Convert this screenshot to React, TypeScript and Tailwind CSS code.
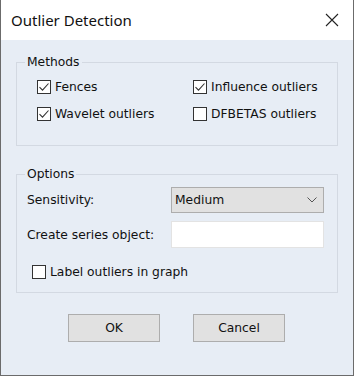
import React from "react";

const font = { fontFamily: '"DejaVu Sans", sans-serif' };

function Check({ checked }: { checked: boolean }) {
  return (
    <span className="w-[14px] h-[14px] border border-[#333333] bg-white flex items-center justify-center shrink-0">
      {checked && (
        <svg width="12" height="12" viewBox="0 0 12 12">
          <path d="M1.5 6.2 L4.5 9.2 L10.5 2.5" fill="none" stroke="#333333" strokeWidth="1.1" />
        </svg>
      )}
    </span>
  );
}

function CheckItem({ checked, label }: { checked: boolean; label: string }) {
  return (
    <label className="flex items-center gap-[4px] h-[16px] text-[12.3px] text-[#111]">
      <Check checked={checked} />
      <span>{label}</span>
    </label>
  );
}

export default function App() {
  return (
    <div className="w-[354px] h-[376px] bg-[#e7edf5] border-l border-r border-b border-[#6b6b6b] flex flex-col" style={font}>
      <div className="h-[40px] bg-white flex items-center justify-between pl-[10px] pr-[14px] shrink-0">
        <span className="text-[15px] text-[#111]" style={{ fontFamily: '"Noto Sans", sans-serif' }}>
          Outlier Detection
        </span>
        <svg width="14" height="14" viewBox="0 0 14 14">
          <path d="M1 1 L13 13 M13 1 L1 13" stroke="#222" strokeWidth="1.1" />
        </svg>
      </div>
      <div className="flex flex-col px-[15px]">
        <fieldset className="mt-[13px] h-[93px] border border-[#d3d9e2] pl-[8px] pr-[10px] pb-0">
          <legend className="px-[2px] text-[12.3px] text-[#111]">Methods</legend>
          <div className="grid grid-cols-[156px_1fr] mt-[8px] pl-[12px] gap-y-[11px]">
            <CheckItem checked label="Fences" />
            <CheckItem checked label="Influence outliers" />
            <CheckItem checked label="Wavelet outliers" />
            <CheckItem checked={false} label="DFBETAS outliers" />
          </div>
        </fieldset>
        <fieldset className="mt-[19px] h-[128px] border border-[#d3d9e2] pl-[8px] pr-[10px]">
          <legend className="px-[2px] text-[12.3px] text-[#111]">Options</legend>
          <div className="flex items-center mt-[4px]">
            <span className="w-[146px] text-[12.3px] text-[#111] pl-[2px]">Sensitivity:</span>
            <div className="w-[153px] h-[26px] bg-[#e1e1e1] border border-[#adadad] flex items-center justify-between pl-[3px] pr-[6px] text-[12.3px] text-[#111]">
              <span>Medium</span>
              <svg width="10" height="6" viewBox="0 0 10 6">
                <path d="M0.5 0.5 L5 5 L9.5 0.5" fill="none" stroke="#555" strokeWidth="1" />
              </svg>
            </div>
          </div>
          <div className="flex items-center mt-[8px]">
            <span className="w-[146px] text-[12.3px] text-[#111] pl-[2px]">Create series object:</span>
            <div className="w-[153px] h-[27px] bg-white border border-[#e3e3e3]" />
          </div>
          <div className="mt-[16px] pl-[7px]">
            <CheckItem checked={false} label="Label outliers in graph" />
          </div>
        </fieldset>
        <div className="flex gap-[33px] mt-[21px] pl-[52px]">
          <div className="w-[92px] h-[28px] bg-[#e1e1e1] border border-[#adadad] flex items-center justify-center text-[12.3px] text-[#111]">OK</div>
          <div className="w-[92px] h-[28px] bg-[#e1e1e1] border border-[#adadad] flex items-center justify-center text-[12.3px] text-[#111]">Cancel</div>
        </div>
      </div>
    </div>
  );
}
